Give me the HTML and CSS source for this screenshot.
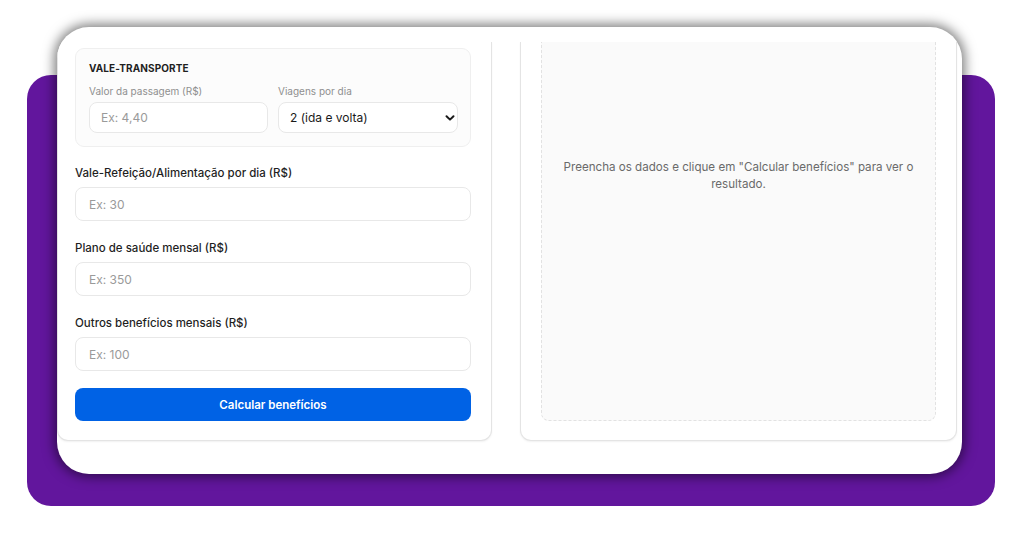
FILE: index.html
```html
<!DOCTYPE html>
<html lang="pt-BR">
<head>
<meta charset="utf-8">
<title>Calculadora de benefícios</title>
<link rel="stylesheet" href="styles.css">
</head>
<body>
<div class="stage">
  <div class="backdrop"></div>
  <div class="frame">
    <div class="columns">
      <section class="card form-card">
        <div class="group-box">
          <div class="group-title">VALE-TRANSPORTE</div>
          <div class="group-grid">
            <div class="sub-field">
              <label class="sub-label">Valor da passagem (R$)</label>
              <input class="input small" type="text" placeholder="Ex: 4,40">
            </div>
            <div class="sub-field">
              <label class="sub-label">Viagens por dia</label>
              <div class="select-wrap">
                <select class="input small select">
                  <option>2 (ida e volta)</option>
                </select>
                <svg class="chevron" width="10" height="8" viewBox="0 0 10 8"><path d="M1.5 2.2 L5 5.6 L8.5 2.2" fill="none" stroke="#1a1a1a" stroke-width="2" stroke-linecap="round" stroke-linejoin="round"/></svg>
              </div>
            </div>
          </div>
        </div>
        <div class="field">
          <label class="label">Vale-Refeição/Alimentação por dia (R$)</label>
          <input class="input" type="text" placeholder="Ex: 30">
        </div>
        <div class="field">
          <label class="label">Plano de saúde mensal (R$)</label>
          <input class="input" type="text" placeholder="Ex: 350">
        </div>
        <div class="field">
          <label class="label">Outros benefícios mensais (R$)</label>
          <input class="input" type="text" placeholder="Ex: 100">
        </div>
        <button class="btn" type="button">Calcular benefícios</button>
      </section>
      <section class="card result-card">
        <div class="result-box">
          <p class="result-text">Preencha os dados e clique em "Calcular benefícios" para ver o resultado.</p>
        </div>
      </section>
    </div>
  </div>
</div>
</body>
</html>
```
FILE: styles.css
```css
* { box-sizing: border-box; }
html, body { margin: 0; padding: 0; background: #ffffff; }
body {
  width: 1024px;
  height: 536px;
  overflow: hidden;
  font-family: Inter, "Noto Sans", "Liberation Sans", sans-serif;
  color: #1f1f1f;
}
.stage {
  display: grid;
  grid-template-columns: 1fr;
  grid-template-rows: 536px;
}
.backdrop {
  grid-area: 1 / 1;
  margin: 75px 0 0 27px;
  width: 968px;
  height: 431px;
  background: #62169d;
  border-radius: 24px;
}
.frame {
  grid-area: 1 / 1;
  margin: 27px 0 0 57px;
  width: 905px;
  height: 447px;
  background: #ffffff;
  border-radius: 32px;
  box-shadow: 0 0 12px 3px rgba(0, 0, 0, 0.5);
  overflow: hidden;
  padding-top: 15px;
}
.columns {
  display: flex;
  gap: 28px;
  align-items: flex-start;
}
.card {
  background: #ffffff;
  border: 1px solid #e4e4e4;
  border-top: none;
  border-radius: 0 0 11px 11px;
  box-shadow: 0 1px 2px rgba(0, 0, 0, 0.06);
}
.form-card {
  width: 435px;
  height: 399px;
  padding: 6px 20px 0 17px;
}
.group-box {
  background: #fcfcfc;
  border: 1px solid #efefef;
  border-radius: 9px;
  padding: 12px 12px 12px 13px;
  height: 99px;
}
.group-title {
  font-size: 10px;
  font-weight: 700;
  line-height: 14px;
  letter-spacing: 0.1px;
  color: #1f1f1f;
  margin-bottom: 10px;
}
.group-grid {
  display: grid;
  grid-template-columns: 179px 180px;
  gap: 10px;
}
.sub-field { display: flex; flex-direction: column; }
.sub-label {
  font-size: 10px;
  line-height: 12px;
  color: #8f8f8f;
  margin-bottom: 5px;
}
.input {
  display: block;
  width: 100%;
  height: 34px;
  border: 1px solid #e8e8e8;
  border-radius: 8px;
  background: #ffffff;
  padding: 0 13px;
  font-family: inherit;
  font-size: 12px;
  color: #1f1f1f;
  outline: none;
}
.input::placeholder { color: #9a9a9a; }
.input.small { height: 31px; padding: 0 11px; }
.select-wrap { position: relative; }
.select {
  appearance: none;
  -webkit-appearance: none;
  padding-left: 13px;
  color: #1a1a1a;
}
.chevron {
  position: absolute;
  right: 3px;
  top: 12px;
  pointer-events: none;
}
.field { margin-top: 17px; }
.field + .field { margin-top: 18px; }
.label {
  display: block;
  font-size: 11.5px;
  font-weight: 500;
  line-height: 15px;
  color: #1f1f1f;
  padding-top: 2px;
  margin-bottom: 6px;
}
.btn {
  display: block;
  width: 100%;
  height: 33px;
  margin-top: 17px;
  border: none;
  border-radius: 8px;
  background: #0062e5;
  color: #ffffff;
  font-family: inherit;
  font-size: 11.5px;
  font-weight: 600;
}
.result-card {
  width: 437px;
  height: 399px;
  padding: 0 20px 20px 20px;
}
.result-box {
  height: 379px;
  background: #fafafa;
  border: 1px dashed #e2e2e2;
  border-top: none;
  border-radius: 0 0 8px 8px;
  padding: 117px 20px 0;
}
.result-text {
  margin: 0;
  text-align: center;
  font-size: 11.6px;
  line-height: 17px;
  color: #6a6a6a;
}
```
